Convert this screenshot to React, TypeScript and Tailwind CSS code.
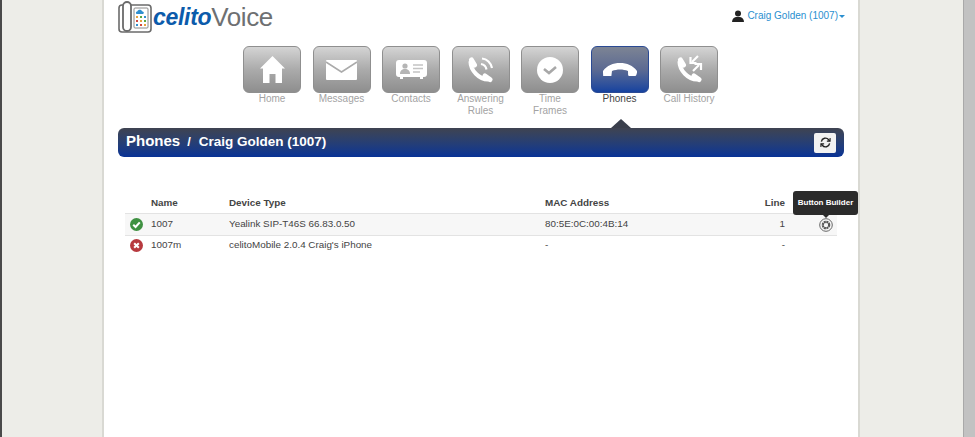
import React from 'react';

const PhoneHandset = () => (
  <svg viewBox="0 0 26 26" className="absolute bottom-0 left-0 h-[26px] w-[26px]" fill="none" stroke="#fff" strokeLinecap="round">
    <path d="M3.500 5C3.500 13 12 22.500 21 22.500" strokeWidth="4" />
    <path d="M4.500 3l3 5" strokeWidth="5" />
    <path d="M18 19l5 3.500" strokeWidth="5" />
  </svg>
);

const HomeIcon = () => (
  <svg viewBox="0 0 25 27" className="h-[27px] w-[25px]">
    <path d="M12.500 0 0 12.500h3V27h6.500v-9h6v9H22V12.500h3z" fill="#fff" />
  </svg>
);

const MailIcon = () => (
  <svg viewBox="0 0 31 20" className="h-[20px] w-[31px]">
    <rect width="31" height="20" rx="1" fill="#fff" />
    <path d="M0 2 15.500 12 31 2" fill="none" stroke="#ababab" strokeWidth="1.500" />
  </svg>
);

const ContactIcon = () => (
  <svg viewBox="0 0 31 19" className="h-[19px] w-[31px]">
    <path d="M3 0h25a3 3 0 0 1 3 3v11a3 3 0 0 1-3 3h-1v2h-3v-2H7v2H4v-2H3a3 3 0 0 1-3-3V3a3 3 0 0 1 3-3z" fill="#fff" />
    <circle cx="9" cy="6" r="2.600" fill="#b5b5b5" />
    <path d="M4 14c0-3.500 2-5 5-5s5 1.500 5 5z" fill="#b5b5b5" />
    <path d="M17 5h10M17 8.500h10M17 12h7" stroke="#c4c4c4" strokeWidth="1.400" />
  </svg>
);

const AnswerIcon = () => (
  <div className="relative h-[26px] w-[27px]">
    <PhoneHandset />
    <svg viewBox="0 0 27 26" className="absolute inset-0 h-[26px] w-[27px]" fill="none" stroke="#fff" strokeWidth="2.200">
      <path d="M14 7c3 .5 5 2.500 5.500 5.500" />
      <path d="M15 1.500c5 .5 9 4.500 10 9.500" />
    </svg>
  </div>
);

const ClockIcon = () => (
  <svg viewBox="0 0 26 26" className="h-[26px] w-[26px]">
    <circle cx="13" cy="13" r="13" fill="#fff" />
    <path d="M7 12l5 4 7-6" fill="none" stroke="#a8a8a8" strokeWidth="2.600" />
  </svg>
);

const HangupIcon = () => (
  <svg viewBox="0 0 34 13" className="h-[13px] w-[34px]">
    <path d="M0 8C4 2.500 10 0 17 0s13 2.500 17 8c.3.600.2 1.200 0 1.800l-.7 2.200c-.2.600-.6 1-1.300 1h-5.500c-.8 0-1.300-.5-1.400-1.300L25 8c-5-2-11-2-16 0l-.6 4.700c-.1.800-.6 1.300-1.400 1.300H1.500c-.7 0-1.100-.4-1.300-1L0 9.800C-.2 9.200-.3 8.600 0 8z" fill="#fff" />
  </svg>
);

const HistoryIcon = () => (
  <div className="relative h-[26px] w-[27px]">
    <PhoneHandset />
    <svg viewBox="0 0 27 26" className="absolute inset-0 h-[26px] w-[27px] overflow-visible" fill="none" stroke="#fff" strokeWidth="2.200">
      <path d="M22 -1l-6 6" />
      <path d="M14.500 0v6h6" />
      <path d="M17 14l6-6" />
      <path d="M18.500 7H25v6" />
    </svg>
  </div>
);

const navItems = [
  { label: ['Home'], icon: <HomeIcon /> },
  { label: ['Messages'], icon: <MailIcon /> },
  { label: ['Contacts'], icon: <ContactIcon /> },
  { label: ['Answering', 'Rules'], icon: <AnswerIcon /> },
  { label: ['Time', 'Frames'], icon: <ClockIcon /> },
  { label: ['Phones'], icon: <HangupIcon />, active: true },
  { label: ['Call History'], icon: <HistoryIcon /> },
];

const Logo = () => (
  <div className="flex items-center">
    <svg viewBox="0 0 34 32" className="h-[32px] w-[34px]" fill="none">
      <rect x="1" y="4" width="32" height="27" rx="3" stroke="#6b6b6b" strokeWidth="1.600" />
      <rect x="5" y="1" width="8" height="29" rx="4" fill="#fff" stroke="#6b6b6b" strokeWidth="1.800" />
      <rect x="16" y="7" width="14" height="20" rx="1" stroke="#8a8a8a" />
      <path d="M19 13c-1.500 0-1.500-2.500.3-2.500.5-2 4-2.500 5 0 2 0 2 2.500.2 2.500z" fill="#2f8fd0" />
      <g>
        <rect x="18" y="15" width="2" height="2" fill="#e8a33d" />
        <rect x="22" y="15" width="2" height="2" fill="#5aa843" />
        <rect x="26" y="15" width="2" height="2" fill="#2f8fd0" />
        <rect x="18" y="19" width="2" height="2" fill="#d2483c" />
        <rect x="22" y="19" width="2" height="2" fill="#e8a33d" />
        <rect x="26" y="19" width="2" height="2" fill="#5aa843" />
        <rect x="18" y="23" width="2" height="2" fill="#2f8fd0" />
        <rect x="22" y="23" width="2" height="2" fill="#d2483c" />
        <rect x="26" y="23" width="2" height="2" fill="#e8a33d" />
      </g>
    </svg>
    <span className="ml-[1px] text-[23px] font-bold italic leading-none tracking-[-0.3px] text-[#0c5bab]">celito</span>
    <span className="text-[26px] leading-none tracking-[-0.4px] text-[#6e7072]">Voice</span>
  </div>
);

const GRID = 'grid grid-cols-[26px_78px_316px_200px_40px_1fr] items-center';

export default function App() {
  return (
    <div className="flex h-[437px] w-[975px] overflow-hidden bg-[#edede8] font-['Liberation_Sans',Arial,sans-serif]">
      <div className="w-[2px] bg-[#4a4a4a]" />
      <div className="w-[100px]" />
      <main className="h-full w-[758px] border-x-2 border-x-[#d9d9d3] bg-white pt-[1px]">
        <div className="flex h-[45px] items-start justify-between pl-[14px] pr-[13px]">
          <Logo />
          <div className="mt-[9px] flex items-center text-[10px] leading-[12px] text-[#2a8fd0]">
            <svg viewBox="0 0 12 12" className="mr-[3px] h-[12px] w-[12px]">
              <circle cx="6" cy="3.500" r="3" fill="#222" />
              <path d="M0 12c0-3 2-4.500 4-5h4c2 .5 4 2 4 5z" fill="#222" />
            </svg>
            Craig Golden (1007)
            <span className="ml-[1px] mt-[1px] h-0 w-0 border-x-[3px] border-t-[3px] border-x-transparent border-t-[#2a8fd0]" />
          </div>
        </div>

        <nav className="flex h-[82px] justify-center gap-[11.500px] pr-[1px]">
          {navItems.map((item) => (
            <div key={item.label[0]} className="relative flex w-[58px] flex-col items-center">
              <div
                className={
                  item.active
                    ? 'relative flex h-[47px] w-[58px] items-center justify-center overflow-hidden rounded-[6px] border border-[#2a4a94] bg-gradient-to-b from-[#7d8494] via-[#5c6a92] to-[#16429f]'
                    : 'relative flex h-[47px] w-[58px] items-center justify-center overflow-hidden rounded-[6px] border border-[#8f8f8f] bg-gradient-to-b from-[#d4d4d4] via-[#ababab] to-[#8e8e8e]'
                }
              >
                {item.icon}
              </div>
              <div className={item.active ? 'whitespace-nowrap text-center text-[10px] leading-[11.500px] text-[#444]' : 'whitespace-nowrap text-center text-[10px] leading-[11.500px] text-[#a3a3a3]'}>
                {item.label.map((line) => (
                  <div key={line}>{line}</div>
                ))}
              </div>
              {item.active && (
                <span className="absolute left-[20px] top-[73px] h-0 w-0 border-x-[10px] border-b-[9px] border-x-transparent border-b-[#3a3f4c]" />
              )}
            </div>
          ))}
        </nav>

        <div className="mx-[14px] flex h-[29px] items-center justify-between rounded-[6px] bg-gradient-to-b from-[#3f4350] to-[#083296] pl-[8px] pr-[8px] font-bold text-white">
          <div className="mt-[-2px] flex items-baseline">
            <span className="text-[15px]">Phones</span>
            <span className="ml-[7px] mr-[8px] text-[13px]">/</span>
            <span className="text-[13.500px]">Craig Golden (1007)</span>
          </div>
          <button className="flex h-[20px] w-[22px] items-center justify-center rounded-[2px] bg-[#f2f2f2]">
            <svg viewBox="0 0 12 12" className="h-[11px] w-[11px]" fill="none" stroke="#222" strokeWidth="1.500">
              <path d="M1.500 5A4.500 4.500 0 0 1 9.500 3L10.500 4.500M10.500 7A4.500 4.500 0 0 1 2.500 9L1.500 7.500" />
              <path d="M11 1v3.500H7.500M1 11V7.500h3.500" strokeWidth="1.200" />
            </svg>
          </button>
        </div>

        <section className="ml-[21px] mr-[21px] mt-[37px] text-[9.850px] text-[#444]">
          <div className={`${GRID} h-[19px] pb-[1px] font-bold`}>
            <span />
            <span>Name</span>
            <span>Device Type</span>
            <span>MAC Address</span>
            <span className="text-right">Line</span>
            <span />
          </div>
          <div className={`${GRID} h-[23px] border-y border-[#e3e3e3] bg-[#f7f7f7]`}>
            <svg viewBox="0 0 14 14" className="ml-[5px] h-[13px] w-[13px]">
              <circle cx="7" cy="7" r="7" fill="#3f9142" />
              <path d="M3.500 7.200 6 9.700l4.500-5" fill="none" stroke="#fff" strokeWidth="2.200" />
            </svg>
            <span>1007</span>
            <span>Yealink SIP-T46S 66.83.0.50</span>
            <span>80:5E:0C:00:4B:14</span>
            <span className="text-right">1</span>
            <div className="relative flex justify-end pr-[4px]">
              <svg viewBox="0 0 14 14" className="h-[14px] w-[14px]" fill="none">
                <circle cx="7" cy="7" r="6.300" stroke="#666" />
                <circle cx="7" cy="7" r="3.200" stroke="#555" strokeWidth="2.200" strokeDasharray="2 .5" />
              </svg>
              <div className="absolute bottom-[17px] right-[-21px] flex h-[24px] w-[65px] items-center justify-center whitespace-nowrap rounded-[3px] bg-[#2b2b2b] text-[8px] font-bold text-white">
                Button Builder
                <span className="absolute bottom-[-3px] left-1/2 ml-[-3px] h-0 w-0 border-x-[3px] border-t-[3px] border-x-transparent border-t-[#2b2b2b]" />
              </div>
            </div>
          </div>
          <div className={`${GRID} h-[19px]`}>
            <svg viewBox="0 0 14 14" className="ml-[5px] h-[13px] w-[13px]">
              <circle cx="7" cy="7" r="7" fill="#b73a3f" />
              <path d="M4.500 4.500l5 5M9.500 4.500l-5 5" stroke="#fff" strokeWidth="2.200" />
            </svg>
            <span>1007m</span>
            <span>celitoMobile 2.0.4 Craig's iPhone</span>
            <span>-</span>
            <span className="text-right">-</span>
            <span />
          </div>
        </section>
      </main>
      <div className="w-[103px]" />
      <div className="w-[12px] border-l border-[#a9a9a9] bg-[#c2c2c2]" />
    </div>
  );
}
